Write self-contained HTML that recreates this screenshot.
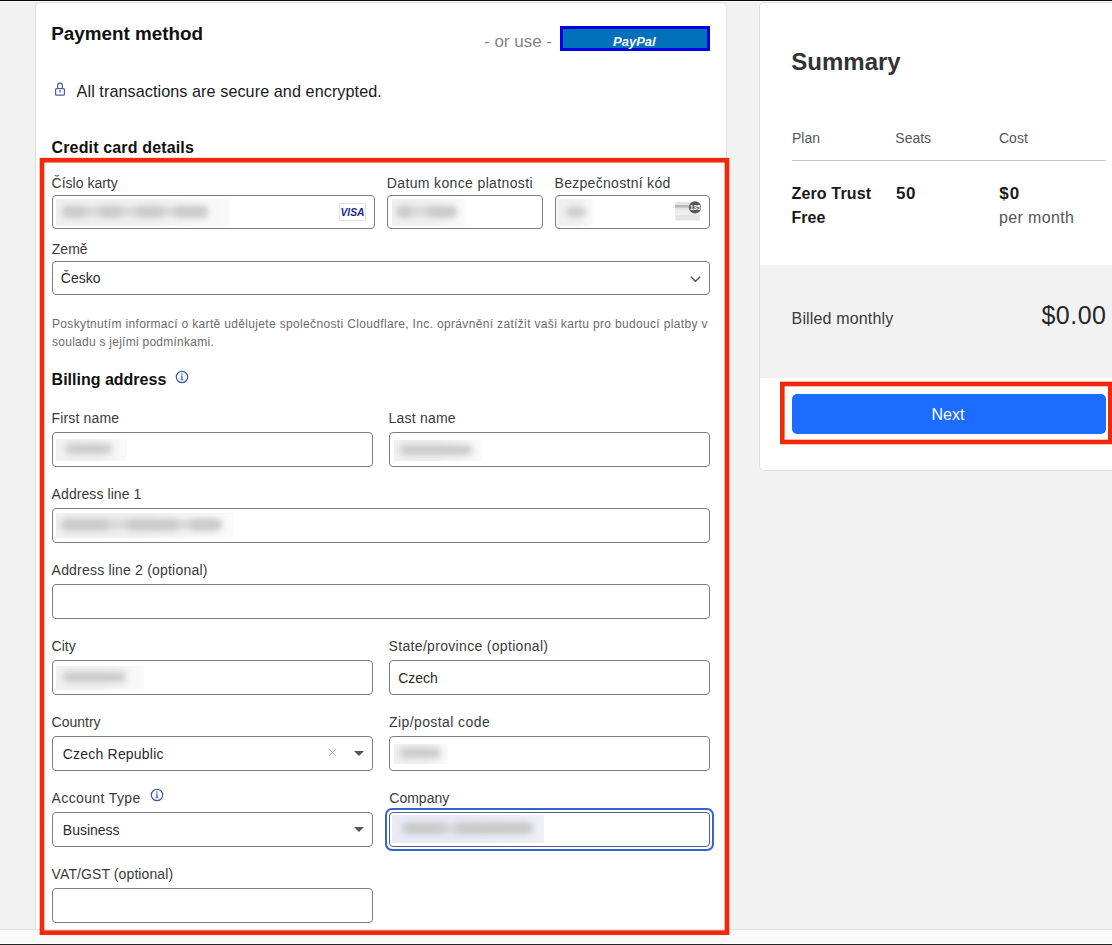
<!DOCTYPE html><html><head><meta charset="utf-8"><style>
html,body{margin:0;padding:0;}
body{width:1112px;height:945px;overflow:hidden;position:relative;background:#f2f2f2;font-family:"Liberation Sans",sans-serif;}
.t{position:absolute;white-space:nowrap;}
</style></head><body>
<div style="position:absolute;left:0px;top:0px;width:1112px;height:1px;box-sizing:border-box;background:#0a0a0a"></div>
<div style="position:absolute;left:0px;top:1px;width:1112px;height:1px;box-sizing:border-box;background:#fdfdfd"></div>
<div style="position:absolute;left:0px;top:2px;width:1112px;height:1px;box-sizing:border-box;background:#ececec"></div>
<div style="position:absolute;left:35px;top:2px;width:692px;height:1000px;box-sizing:border-box;background:#fff;border:1px solid #dedede;border-radius:5px"></div>
<div style="position:absolute;left:759px;top:2px;width:400px;height:469px;box-sizing:border-box;background:#fff;border:1px solid #dedede;border-radius:5px"></div>
<div style="position:absolute;left:760px;top:265px;width:400px;height:113px;box-sizing:border-box;background:#f2f2f2"></div>
<div class="t" style="left:51.3px;top:21.50px;font-size:18.85px;line-height:24px;font-weight:700;color:#111;letter-spacing:0px;font-style:normal;">Payment method</div>
<div class="t" style="left:484px;top:30.50px;font-size:17px;line-height:21px;font-weight:400;color:#858585;letter-spacing:0px;font-style:normal;">- or use -</div>
<div style="position:absolute;left:560px;top:26px;width:150px;height:25px;box-sizing:border-box;background:#0070ba;border:3px solid #0000e0"></div>
<div class="t" style="left:613px;top:33.50px;font-size:13px;line-height:16px;font-weight:700;color:#fff;letter-spacing:0px;font-style:italic;">PayPal</div>
<svg style="position:absolute;left:54px;top:82px" width="13" height="14" viewBox="0 0 13 14"><path d="M3.6 6.8 V3.6 a2.4 2.4 0 0 1 4.8 0 V6.8" fill="none" stroke="#4b5c96" stroke-width="1.2"/><rect x="1.6" y="6.6" width="8.8" height="6.6" rx="0.9" fill="none" stroke="#4b5c96" stroke-width="1.2"/><rect x="5.4" y="8.1" width="1.3" height="2.6" rx="0.4" fill="#5a6690"/></svg>
<div class="t" style="left:76.6px;top:81.00px;font-size:16.2px;line-height:20px;font-weight:400;color:#1a1a1a;letter-spacing:0.07px;font-style:normal;">All transactions are secure and encrypted.</div>
<div class="t" style="left:51.5px;top:137.50px;font-size:16px;line-height:20px;font-weight:700;color:#111;letter-spacing:0.15px;font-style:normal;">Credit card details</div>
<div class="t" style="left:51.6px;top:174.00px;font-size:14px;line-height:18px;font-weight:400;color:#3a3a3a;letter-spacing:0px;font-style:normal;">Číslo karty</div>
<div class="t" style="left:386.8px;top:174.00px;font-size:14px;line-height:18px;font-weight:400;color:#3a3a3a;letter-spacing:0.36px;font-style:normal;">Datum konce platnosti</div>
<div class="t" style="left:554.5px;top:174.00px;font-size:14px;line-height:18px;font-weight:400;color:#3a3a3a;letter-spacing:0.3px;font-style:normal;">Bezpečnostní kód</div>
<div style="position:absolute;left:52px;top:195px;width:323px;height:34px;box-sizing:border-box;border:1px solid #7c7c7c;border-radius:4px;background:#fff;"></div>
<div style="position:absolute;left:387px;top:195px;width:156px;height:34px;box-sizing:border-box;border:1px solid #7c7c7c;border-radius:4px;background:#fff;"></div>
<div style="position:absolute;left:555px;top:195px;width:155px;height:34px;box-sizing:border-box;border:1px solid #7c7c7c;border-radius:4px;background:#fff;"></div>
<div style="position:absolute;left:56px;top:199px;width:174px;height:27px;background:linear-gradient(to right,#f0f0f0 0%,#f0f0f0 50%,#fafafa 100%);overflow:hidden">
<div style="position:absolute;left:7px;top:8.4px;width:144px;height:9px;background:#d6d6d6;border-radius:4px;filter:blur(3px)"></div>
<div style="position:absolute;left:7px;top:7.9px;width:23px;height:10px;background:#cacaca;border-radius:5px;filter:blur(3px)"></div>
<div style="position:absolute;left:43px;top:7.9px;width:23px;height:10px;background:#cacaca;border-radius:5px;filter:blur(3px)"></div>
<div style="position:absolute;left:81px;top:7.9px;width:27px;height:10px;background:#cacaca;border-radius:5px;filter:blur(3px)"></div>
<div style="position:absolute;left:118px;top:7.9px;width:33px;height:10px;background:#cacaca;border-radius:5px;filter:blur(3px)"></div>
</div>
<div style="position:absolute;left:392px;top:199px;width:74px;height:27px;background:linear-gradient(to right,#f0f0f0 0%,#f0f0f0 50%,#fafafa 100%);overflow:hidden">
<div style="position:absolute;left:5px;top:8.4px;width:59px;height:9px;background:#d6d6d6;border-radius:4px;filter:blur(3px)"></div>
<div style="position:absolute;left:5px;top:7.9px;width:15px;height:10px;background:#cacaca;border-radius:5px;filter:blur(3px)"></div>
<div style="position:absolute;left:35px;top:7.9px;width:29px;height:10px;background:#cacaca;border-radius:5px;filter:blur(3px)"></div>
</div>
<div style="position:absolute;left:557px;top:199px;width:36px;height:27px;background:linear-gradient(to right,#f0f0f0 0%,#f0f0f0 50%,#fafafa 100%);overflow:hidden">
<div style="position:absolute;left:9px;top:7.9px;width:20px;height:10px;background:#cacaca;border-radius:5px;filter:blur(3px)"></div>
</div>
<div style="position:absolute;left:339px;top:203px;width:27px;height:18px;box-sizing:border-box;border:1px solid #e2e2e2;background:#fff"></div>
<div class="t" style="left:340.5px;top:206.30px;font-size:10.3px;line-height:13px;font-weight:700;color:#1b2a8a;letter-spacing:0px;font-style:italic;">VISA</div>
<svg style="position:absolute;left:674px;top:199px" width="30" height="23" viewBox="0 0 30 23"><rect x="1.2" y="2.8" width="24.6" height="18.8" rx="1.5" fill="#e4e4e4"/><rect x="1.2" y="6" width="24.6" height="2.6" fill="#b9b9b9"/><rect x="1.2" y="11" width="24.6" height="5" fill="#ededed"/><circle cx="21" cy="8.4" r="6.1" fill="#555"/><text x="21" y="10.8" font-family="Liberation Sans" font-size="6.8" font-weight="700" fill="#fff" text-anchor="middle" letter-spacing="-0.3">135</text></svg>
<div class="t" style="left:51.8px;top:240.00px;font-size:14px;line-height:18px;font-weight:400;color:#3a3a3a;letter-spacing:0px;font-style:normal;">Země</div>
<div style="position:absolute;left:52px;top:261px;width:658px;height:34px;box-sizing:border-box;border:1px solid #7c7c7c;border-radius:4px;background:#fff;"></div>
<div class="t" style="left:60.8px;top:269.00px;font-size:14px;line-height:18px;font-weight:400;color:#2a2a2a;letter-spacing:0px;font-style:normal;">Česko</div>
<svg style="position:absolute;left:689px;top:274px" width="13" height="10" viewBox="0 0 13 10"><path d="M1.8 2.7 L6.5 7.3 L11.2 2.7" fill="none" stroke="#555" stroke-width="1.5"/></svg>
<div class="t" style="left:52px;top:316.50px;font-size:12px;line-height:15px;font-weight:400;color:#6b6b6b;letter-spacing:0.34px;font-style:normal;">Poskytnutím informací o kartě udělujete společnosti Cloudflare, Inc. oprávnění zatížit vaši kartu pro budoucí platby v</div>
<div class="t" style="left:52px;top:334.50px;font-size:12px;line-height:15px;font-weight:400;color:#6b6b6b;letter-spacing:0.26px;font-style:normal;">souladu s jejími podmínkami.</div>
<div class="t" style="left:51.6px;top:369.50px;font-size:16px;line-height:20px;font-weight:700;color:#111;letter-spacing:0px;font-style:normal;">Billing address</div>
<svg style="position:absolute;left:174px;top:368.7px" width="16" height="16" viewBox="0 0 16 16"><circle cx="8" cy="8" r="5.7" fill="none" stroke="#3d59a3" stroke-width="1.2"/><circle cx="8" cy="5.0" r="0.8" fill="#3d59a3"/><path d="M6.9 6.6 H8.6 V10.5 H9.6 V11.3 H6.4 V10.5 H7.4 V7.3 H6.9 Z" fill="#3d59a3"/></svg>
<div class="t" style="left:51.6px;top:409.00px;font-size:14px;line-height:18px;font-weight:400;color:#3a3a3a;letter-spacing:0.15px;font-style:normal;">First name</div>
<div style="position:absolute;left:52px;top:432px;width:321px;height:35px;box-sizing:border-box;border:1px solid #7c7c7c;border-radius:4px;background:#fff;"></div>
<div style="position:absolute;left:56px;top:439px;width:71px;height:22px;background:linear-gradient(to right,#f0f0f0 0%,#f0f0f0 50%,#fafafa 100%);overflow:hidden">
<div style="position:absolute;left:10px;top:5.4px;width:46px;height:10px;background:#cacaca;border-radius:5px;filter:blur(3px)"></div>
</div>
<div class="t" style="left:388.6px;top:409.00px;font-size:14px;line-height:18px;font-weight:400;color:#3a3a3a;letter-spacing:0.2px;font-style:normal;">Last name</div>
<div style="position:absolute;left:389px;top:432px;width:321px;height:35px;box-sizing:border-box;border:1px solid #7c7c7c;border-radius:4px;background:#fff;"></div>
<div style="position:absolute;left:394px;top:440px;width:88px;height:21px;background:linear-gradient(to right,#f0f0f0 0%,#f0f0f0 50%,#fafafa 100%);overflow:hidden">
<div style="position:absolute;left:6px;top:4.9px;width:72px;height:10px;background:#cacaca;border-radius:5px;filter:blur(3px)"></div>
</div>
<div class="t" style="left:51.6px;top:485.00px;font-size:14px;line-height:18px;font-weight:400;color:#3a3a3a;letter-spacing:0.08px;font-style:normal;">Address line 1</div>
<div style="position:absolute;left:52px;top:508px;width:658px;height:35px;box-sizing:border-box;border:1px solid #7c7c7c;border-radius:4px;background:#fff;"></div>
<div style="position:absolute;left:56px;top:513px;width:177px;height:25px;background:linear-gradient(to right,#f0f0f0 0%,#f0f0f0 50%,#fafafa 100%);overflow:hidden">
<div style="position:absolute;left:6px;top:7.4px;width:159px;height:9px;background:#d6d6d6;border-radius:4px;filter:blur(3px)"></div>
<div style="position:absolute;left:6px;top:6.9px;width:47px;height:10px;background:#cacaca;border-radius:5px;filter:blur(3px)"></div>
<div style="position:absolute;left:71px;top:6.9px;width:52px;height:10px;background:#cacaca;border-radius:5px;filter:blur(3px)"></div>
<div style="position:absolute;left:134px;top:6.9px;width:31px;height:10px;background:#cacaca;border-radius:5px;filter:blur(3px)"></div>
</div>
<div class="t" style="left:51.6px;top:561.00px;font-size:14px;line-height:18px;font-weight:400;color:#3a3a3a;letter-spacing:0.2px;font-style:normal;">Address line 2 (optional)</div>
<div style="position:absolute;left:52px;top:584px;width:658px;height:35px;box-sizing:border-box;border:1px solid #7c7c7c;border-radius:4px;background:#fff;"></div>
<div class="t" style="left:51.6px;top:637.00px;font-size:14px;line-height:18px;font-weight:400;color:#3a3a3a;letter-spacing:0px;font-style:normal;">City</div>
<div style="position:absolute;left:52px;top:660px;width:321px;height:35px;box-sizing:border-box;border:1px solid #7c7c7c;border-radius:4px;background:#fff;"></div>
<div style="position:absolute;left:56px;top:666px;width:88px;height:24px;background:linear-gradient(to right,#f0f0f0 0%,#f0f0f0 50%,#fafafa 100%);overflow:hidden">
<div style="position:absolute;left:7px;top:6.4px;width:63px;height:10px;background:#cacaca;border-radius:5px;filter:blur(3px)"></div>
</div>
<div class="t" style="left:388.6px;top:637.00px;font-size:14px;line-height:18px;font-weight:400;color:#3a3a3a;letter-spacing:0.32px;font-style:normal;">State/province (optional)</div>
<div style="position:absolute;left:389px;top:660px;width:321px;height:35px;box-sizing:border-box;border:1px solid #7c7c7c;border-radius:4px;background:#fff;"></div>
<div class="t" style="left:398.2px;top:669.00px;font-size:14px;line-height:18px;font-weight:400;color:#2a2a2a;letter-spacing:0px;font-style:normal;">Czech</div>
<div class="t" style="left:51.6px;top:713.00px;font-size:14px;line-height:18px;font-weight:400;color:#3a3a3a;letter-spacing:0px;font-style:normal;">Country</div>
<div style="position:absolute;left:52px;top:736px;width:321px;height:35px;box-sizing:border-box;border:1px solid #7c7c7c;border-radius:4px;background:#fff;"></div>
<div class="t" style="left:62.8px;top:745.00px;font-size:14px;line-height:18px;font-weight:400;color:#2a2a2a;letter-spacing:0.2px;font-style:normal;">Czech Republic</div>
<svg style="position:absolute;left:327px;top:747px" width="11" height="11" viewBox="0 0 11 11"><path d="M2 2 L9 9 M9 2 L2 9" stroke="#a3a3a3" stroke-width="0.9"/></svg>
<svg style="position:absolute;left:353px;top:750px" width="12" height="7" viewBox="0 0 12 7"><path d="M1 1 L11 1 L6 6 Z" fill="#555"/></svg>
<div class="t" style="left:389.0px;top:713.00px;font-size:14px;line-height:18px;font-weight:400;color:#3a3a3a;letter-spacing:0.41px;font-style:normal;">Zip/postal code</div>
<div style="position:absolute;left:389px;top:736px;width:321px;height:35px;box-sizing:border-box;border:1px solid #7c7c7c;border-radius:4px;background:#fff;"></div>
<div style="position:absolute;left:394px;top:744px;width:54px;height:20px;background:linear-gradient(to right,#f0f0f0 0%,#f0f0f0 50%,#fafafa 100%);overflow:hidden">
<div style="position:absolute;left:6px;top:4.4px;width:41px;height:10px;background:#cacaca;border-radius:5px;filter:blur(3px)"></div>
</div>
<div class="t" style="left:51.6px;top:789.00px;font-size:14px;line-height:18px;font-weight:400;color:#3a3a3a;letter-spacing:0.37px;font-style:normal;">Account Type</div>
<div style="position:absolute;left:52px;top:812px;width:321px;height:35px;box-sizing:border-box;border:1px solid #7c7c7c;border-radius:4px;background:#fff;"></div>
<svg style="position:absolute;left:149px;top:786.6px" width="16" height="16" viewBox="0 0 16 16"><circle cx="8" cy="8" r="5.7" fill="none" stroke="#3d59a3" stroke-width="1.2"/><circle cx="8" cy="5.0" r="0.8" fill="#3d59a3"/><path d="M6.9 6.6 H8.6 V10.5 H9.6 V11.3 H6.4 V10.5 H7.4 V7.3 H6.9 Z" fill="#3d59a3"/></svg>
<div class="t" style="left:62.8px;top:821.00px;font-size:14px;line-height:18px;font-weight:400;color:#2a2a2a;letter-spacing:0px;font-style:normal;">Business</div>
<svg style="position:absolute;left:353px;top:826px" width="12" height="7" viewBox="0 0 12 7"><path d="M1 1 L11 1 L6 6 Z" fill="#555"/></svg>
<div class="t" style="left:389.3px;top:789.00px;font-size:14px;line-height:18px;font-weight:400;color:#3a3a3a;letter-spacing:0px;font-style:normal;">Company</div>
<div style="position:absolute;left:385px;top:808px;width:329px;height:43px;box-sizing:border-box;border:2px solid #3463cc;border-radius:7px"></div>
<div style="position:absolute;left:389px;top:812px;width:321px;height:35px;box-sizing:border-box;border:1px solid #7c7c7c;border-radius:4px;background:#fff;border-color:#4a5f8f"></div>
<div style="position:absolute;left:392px;top:815px;width:152px;height:28px;background:linear-gradient(to right,#e8ebf5 0%,#e8ebf5 50%,#eef0f8 100%);overflow:hidden">
<div style="position:absolute;left:11px;top:8.9px;width:129px;height:9px;background:#d6d6d6;border-radius:4px;filter:blur(3px)"></div>
<div style="position:absolute;left:11px;top:8.4px;width:42px;height:10px;background:#cacaca;border-radius:5px;filter:blur(3px)"></div>
<div style="position:absolute;left:63px;top:8.4px;width:77px;height:10px;background:#cacaca;border-radius:5px;filter:blur(3px)"></div>
</div>
<div class="t" style="left:51.6px;top:865.00px;font-size:14px;line-height:18px;font-weight:400;color:#3a3a3a;letter-spacing:0.1px;font-style:normal;">VAT/GST (optional)</div>
<div style="position:absolute;left:52px;top:888px;width:321px;height:35px;box-sizing:border-box;border:1px solid #7c7c7c;border-radius:4px;background:#fff;"></div>
<div style="position:absolute;left:0px;top:929px;width:1112px;height:1px;box-sizing:border-box;background:#e2e2e2"></div>
<div style="position:absolute;left:0px;top:930px;width:1112px;height:13px;box-sizing:border-box;background:#fafafa"></div>
<div style="position:absolute;left:0px;top:943px;width:1112px;height:1px;box-sizing:border-box;background:#fff"></div>
<div style="position:absolute;left:0px;top:944px;width:1112px;height:1px;box-sizing:border-box;background:#262626"></div>
<svg style="position:absolute;left:0;top:0" width="1112" height="945"><rect x="42.0" y="160.2" width="685.0" height="772.5" fill="none" stroke="#f0290c" stroke-width="4.7"/></svg>
<div class="t" style="left:791.3px;top:46.50px;font-size:24px;line-height:30px;font-weight:700;color:#333;letter-spacing:0px;font-style:normal;">Summary</div>
<div class="t" style="left:792px;top:129.00px;font-size:14px;line-height:18px;font-weight:400;color:#555;letter-spacing:0px;font-style:normal;">Plan</div>
<div class="t" style="left:895.3px;top:129.00px;font-size:14px;line-height:18px;font-weight:400;color:#555;letter-spacing:0px;font-style:normal;">Seats</div>
<div class="t" style="left:999px;top:129.00px;font-size:14px;line-height:18px;font-weight:400;color:#555;letter-spacing:0px;font-style:normal;">Cost</div>
<div style="position:absolute;left:792px;top:160px;width:314px;height:1px;box-sizing:border-box;background:#c8c8c8"></div>
<div class="t" style="left:791.5px;top:183.50px;font-size:16px;line-height:20px;font-weight:700;color:#1a1a1a;letter-spacing:0.15px;font-style:normal;">Zero Trust</div>
<div class="t" style="left:791.5px;top:207.50px;font-size:16px;line-height:20px;font-weight:700;color:#1a1a1a;letter-spacing:0px;font-style:normal;">Free</div>
<div class="t" style="left:896px;top:183.00px;font-size:17px;line-height:21px;font-weight:700;color:#1a1a1a;letter-spacing:0.5px;font-style:normal;">50</div>
<div class="t" style="left:999.3px;top:183.00px;font-size:17px;line-height:21px;font-weight:700;color:#1a1a1a;letter-spacing:1.0px;font-style:normal;">$0</div>
<div class="t" style="left:999px;top:207.50px;font-size:16px;line-height:20px;font-weight:400;color:#555;letter-spacing:0.35px;font-style:normal;">per month</div>
<div class="t" style="left:791.6px;top:308.50px;font-size:16px;line-height:20px;font-weight:400;color:#3a3a3a;letter-spacing:0.15px;font-style:normal;">Billed monthly</div>
<div class="t" style="right:5.5px;top:300px;font-size:25px;line-height:31px;color:#262626;letter-spacing:0.5px">$0.00</div>
<svg style="position:absolute;left:0;top:0" width="1112" height="945"><rect x="782.3" y="384.0" width="328.0" height="58.0" fill="none" stroke="#f0290c" stroke-width="4.6"/></svg>
<div style="position:absolute;left:792px;top:394px;width:314px;height:40px;box-sizing:border-box;background:#1b6cff;border-radius:5px"></div>
<div class="t" style="left:931.5px;top:404.50px;font-size:16px;line-height:20px;font-weight:400;color:#fff;letter-spacing:0px;font-style:normal;">Next</div>
</body></html>
